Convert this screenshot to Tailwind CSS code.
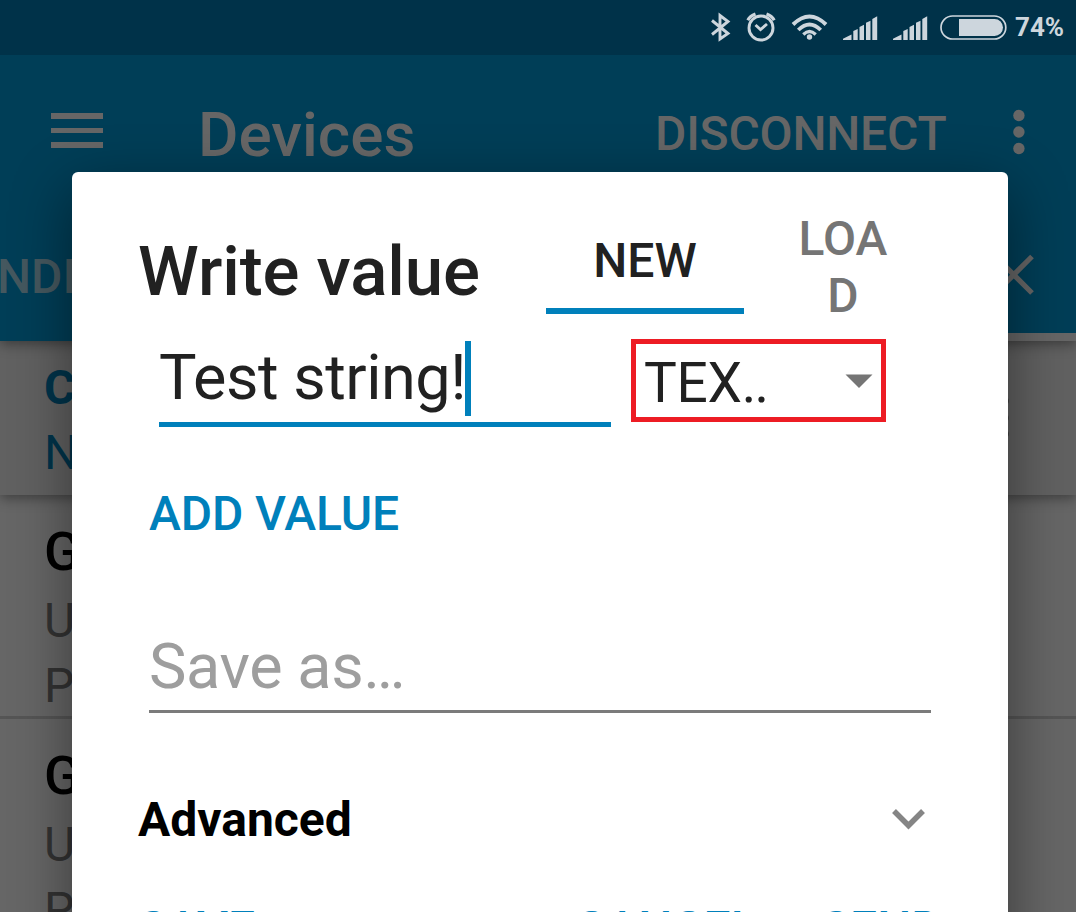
<!DOCTYPE html>
<html lang="en">
<head>
<meta charset="utf-8">
<title>Devices</title>
<script src="https://cdn.jsdelivr.net/npm/@tailwindcss/browser@4"></script>
</head>
<body>
<div class="relative h-[912px] w-[1076px] overflow-hidden bg-[#666666] font-['Roboto',sans-serif] whitespace-nowrap">

  <!-- Status bar -->
  <div class="relative z-10 flex h-[55px] bg-[#003249] pl-[696px]">
    <svg class="h-[55px] w-[315px] shrink-0" viewBox="0 0 315 55" fill="none" stroke="#cdd6dd" stroke-linecap="butt">
      <path d="M16 20.500 32 33.500 24 39V15.500L32 21.500 16 34.500" stroke-width="2.900"/>
      <circle cx="65" cy="28" r="12" stroke-width="2.900"/>
      <path d="M59.500 25 64.500 29.500 71 24" stroke-width="2.900"/>
      <path d="M51.800 20.200Q54 16 59.500 14M78.200 20.200Q76 16 70.500 14" stroke-width="3.200"/>
      <path d="M97 24.500Q113.500 8.500 130 24.500" stroke-width="3.900"/>
      <path d="M102.300 30Q113.500 19 124.700 30" stroke-width="3.800"/>
      <path d="M107.300 34.500Q113.500 28.500 119.700 34.500" stroke-width="3.200"/>
      <circle cx="113.500" cy="37" r="2.700" fill="#cdd6dd" stroke="none"/>
      <g fill="#cdd6dd" stroke="none">
        <path d="M147 40V38.800L155.500 34.500V40ZM157.300 40V31L161.700 29V40ZM163.500 40V27L168 24.800V40ZM170 40V22.800L174.500 20.800V40ZM176.300 40V19L181.200 16.200V40Z"/>
        <path d="M197 40V38.800L205.500 34.500V40ZM207.300 40V31L211.700 29V40ZM213.500 40V27L218 24.800V40ZM220 40V22.800L224.500 20.800V40ZM226.300 40V19L231.200 16.200V40Z"/>
        <path d="M263 19H298.500A8.500 8.500 0 0 1 298.500 36H263Z"/>
      </g>
      <rect x="245" y="16" width="64.800" height="23" rx="11.500" stroke-width="1.700"/>
    </svg>
    <div class="mt-[14px] ml-[4px] text-[26px] leading-[26px] font-bold text-[#cdd6dd]">74%</div>
  </div>

  <!-- App bar -->
  <div class="relative h-[286px] bg-[#003e57] text-[#666666] shadow-[0_3px_12px_rgba(0,0,0,0.4)]">
    <div class="flex h-[120px] items-start">
      <div class="mt-[58px] ml-[51px] flex w-[52px] flex-col gap-[9px]">
        <div class="h-[5.500px] bg-[#666666]"></div>
        <div class="h-[5.500px] bg-[#666666]"></div>
        <div class="h-[5.500px] bg-[#666666]"></div>
      </div>
      <div class="mt-[49px] ml-[95px] w-[457px] text-[62px] leading-[62px] font-medium">Devices</div>
      <div class="mt-[55px] w-[357px] text-[48px] leading-[48px] font-medium tracking-[-0.2px]">DISCONNECT</div>
      <svg class="mt-[54px] h-[46px] w-[14px]" viewBox="0 0 14 46" fill="#666666"><circle cx="6.900" cy="6.500" r="5.700"/><circle cx="6.900" cy="23" r="5.700"/><circle cx="6.900" cy="39.500" r="5.700"/></svg>
    </div>
    <div class="flex h-[158px] items-start justify-between pr-[41px]">
      <div class="mt-[78px] -ml-[3px] text-[48px] leading-[48px] font-medium text-[#45585f]">NDICA</div>
      <svg class="mt-[79px] h-[42px] w-[42px]" viewBox="0 0 42 42" stroke="#666666" stroke-width="5.200"><path d="M2.500 2.500 39 39M39 2.500 2.500 39"/></svg>
    </div>
    <div class="ml-auto h-[8px] w-[300px] bg-[#666666]"></div>
  </div>

  <!-- Selected service -->
  <div class="flex h-[154px] justify-between bg-[#616161] pr-[67px] pl-[44px] text-[48px] text-[#00344b] shadow-[0_3px_12px_rgba(0,0,0,0.4)]">
    <div class="pt-[23px]">
      <div class="leading-[48px] font-bold">Cu</div>
      <div class="mt-[17px] leading-[48px]">No</div>
    </div>
    <svg class="mt-[52px] h-[50px] w-[12px]" viewBox="0 0 12 50" fill="#333333"><circle cx="6" cy="8" r="5.700"/><circle cx="6" cy="25" r="5.700"/><circle cx="6" cy="41" r="5.700"/></svg>
  </div>

  <!-- Service list -->
  <div class="h-[224px] border-b-3 border-[#555555] pt-[30px] pl-[44px] text-[48px] text-[#333333]">
    <div class="text-[54px] leading-[54px] font-medium text-black">Ge</div>
    <div class="mt-[18px] leading-[48px]">UU</div>
    <div class="mt-[17px] leading-[48px]">PR</div>
  </div>
  <div class="h-[224px] pt-[30px] pl-[44px] text-[48px] text-[#333333]">
    <div class="text-[54px] leading-[54px] font-medium text-black">Ge</div>
    <div class="mt-[18px] leading-[48px]">UU</div>
    <div class="mt-[17px] leading-[48px]">PR</div>
  </div>

  <!-- Write value dialog -->
  <div class="absolute top-[172px] left-[72px] z-20 h-[860px] w-[936px] rounded-[6px] bg-white text-[#212121] shadow-[0_18px_60px_rgba(0,0,0,0.45)]">
    <div class="flex h-[142px] items-start">
      <div class="mt-[65px] ml-[66px] w-[408px] text-[69px] leading-[69px] font-medium tracking-[-0.1px]">Write value</div>
      <div class="flex h-[142px] w-[198px] flex-col border-b-6 border-[#0080bb] text-center text-[48px] font-medium">
        <div class="mt-[65px] leading-[48px]">NEW</div>
      </div>
      <div class="mt-[38px] w-[198px] text-center text-[48px] leading-[57px] font-medium text-[#757575]">LOA<br>D</div>
    </div>
    <div class="flex h-[113px] items-start pl-[87px]">
      <div class="flex h-[113px] w-[452px] items-start border-b-[5.500px] border-[#0080bb]">
        <div class="mt-[32px] w-[306px] text-[63px] leading-[63px] tracking-[-0.500px]">Test string!</div>
        <div class="mt-[27px] h-[75px] w-[6px] bg-[#0080bb]"></div>
      </div>
      <div class="mt-[25px] ml-[20px] flex h-[83px] w-[255px] items-start justify-between border-5 border-[#ed1c24]">
        <div class="mt-[12px] ml-[8px] text-[55px] leading-[55px] tracking-[-0.300px]">TEX<span class="tracking-[-1.600px]">..</span></div>
        <svg class="mt-[30px] mr-[8px] h-[14px] w-[28px]" viewBox="0 0 28 14" fill="#757575"><path d="M.500.500H27.500L14 14Z"/></svg>
      </div>
    </div>
    <div class="mt-[63px] ml-[77px] text-[48px] leading-[48px] font-medium tracking-[-0.100px] text-[#0080bb]">ADD VALUE</div>
    <div class="mt-[97px] ml-[77px] h-[78px] w-[782px] border-b-3 border-[#7b7b7b] text-[63px] leading-[63px] tracking-[-0.400px] text-[#9e9e9e]">Save as…</div>
    <div class="mt-[83px] flex items-start justify-between pr-[82px] pl-[66px]">
      <div class="text-[48px] leading-[48px] font-bold text-black">Advanced</div>
      <svg class="mt-[12px] h-[22px] w-[35px]" viewBox="0 0 35 22" fill="none" stroke="#858585" stroke-width="5.500"><path d="M3 3 17.500 17.500 32 3"/></svg>
    </div>
    <div class="mt-[61px] flex pl-[66px] text-[48px] leading-[48px] font-medium text-[#0080bb]">
      <div class="w-[437px]">SAVE</div>
      <div class="w-[246px]">CANCEL</div>
      <div>SEND</div>
    </div>
  </div>
</div>
</body>
</html>
